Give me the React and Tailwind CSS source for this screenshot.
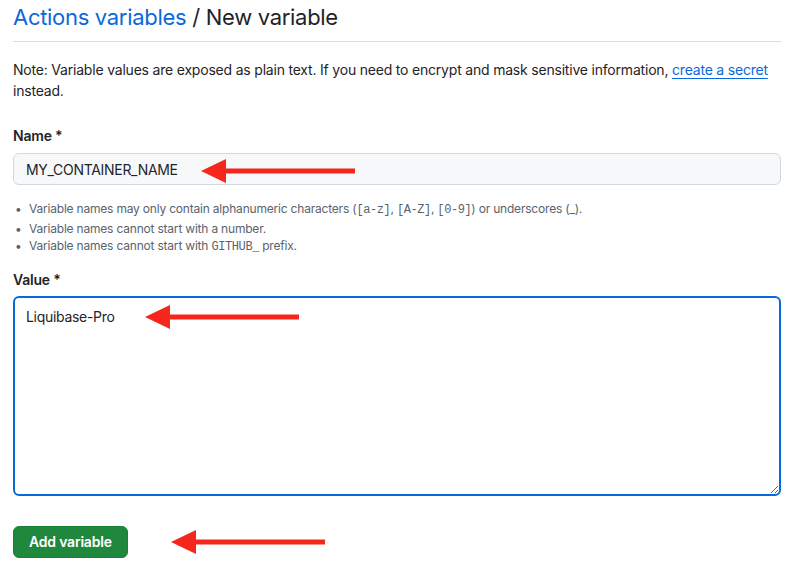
import React from "react";

// Red annotation arrow pointing left; tip at (x, y) in page coordinates
function Arrow({ x, y, length = 154 }) {
  return (
    <svg
      className="absolute pointer-events-none"
      style={{ left: x, top: y - 13 }}
      width={length + 2}
      height={26}
      viewBox={`0 0 ${length + 2} 26`}
    >
      <polygon points="0,13 25,1 25,25" fill="#f5271c" />
      <rect x="22" y="10.5" width={length - 22} height="5" fill="#f5271c" />
    </svg>
  );
}

export default function App() {
  const mono = "font-['Liberation_Mono',monospace] text-[12px] tracking-[-0.4px]";
  const rules = [
    <>
      Variable names may only contain alphanumeric characters (<span className={mono}>[a-z]</span>,{" "}
      <span className={mono}>[A-Z]</span>, <span className={mono}>[0-9]</span>) or underscores (_).
    </>,
    <>Variable names cannot start with a number.</>,
    <>
      Variable names cannot start with <span className={mono}>GITHUB_</span> prefix.
    </>,
  ];

  return (
    <div className="relative w-[795px] h-[567px] overflow-hidden bg-white font-['Inter','Noto_Sans',sans-serif] text-[#1f2328]">
      <div className="pl-[13px] pr-[14px] pt-[2px]">
        {/* Header */}
        <div className="border-b border-[#d8dee4] pb-[9px]">
          <h1 className="text-[22px] leading-[30px] font-normal tracking-[-0.3px]">
            <a className="text-[#0969da]">Actions variables</a> / New variable
          </h1>
        </div>

        {/* Note */}
        <p className="mt-[17px] text-[14px] leading-[21px] tracking-[-0.2px]">
          Note: Variable values are exposed as plain text. If you need to encrypt and mask sensitive information,{" "}
          <a className="text-[#0969da] underline underline-offset-[3px]">create a secret</a> instead.
        </p>

        {/* Name */}
        <label className="block mt-[24px] text-[14px] leading-[21px] font-semibold tracking-[-0.2px]">Name *</label>
        <div className="mt-[7px] h-[32px] rounded-[6px] border border-[#d1d9e0] bg-[#f6f8fa] flex items-center px-[12px] text-[14px] tracking-[-0.3px]">
          MY_CONTAINER_NAME
        </div>
        <ul className="mt-[15px] text-[12px] leading-[17.5px] text-[#59636e] tracking-[-0.2px]">
          {rules.map((r, i) => (
            <li key={i} className="flex">
              <span className="w-[16px] pl-[2px]">•</span>
              <span>{r}</span>
            </li>
          ))}
        </ul>

        {/* Value */}
        <label className="block mt-[12px] text-[14px] leading-[21px] font-semibold tracking-[-0.2px]">Value *</label>
        <textarea
          readOnly
          defaultValue="Liquibase-Pro"
          className="mt-[6px] block w-full h-[200px] rounded-[6px] border-2 border-[#0969da] bg-white px-[11px] py-[9px] text-[14px] leading-[20px] tracking-[-0.3px] outline-none resize-y"
        />

        {/* Submit */}
        <button className="mt-[30px] h-[32px] px-[15px] rounded-[6px] bg-[#1f883d] border border-[#1a7f37] text-white text-[14px] font-semibold tracking-[-0.2px]">
          Add variable
        </button>
      </div>

      <Arrow x={201} y={171} length={154} />
      <Arrow x={145} y={317} length={154} />
      <Arrow x={171} y={542} length={154} />
    </div>
  );
}
